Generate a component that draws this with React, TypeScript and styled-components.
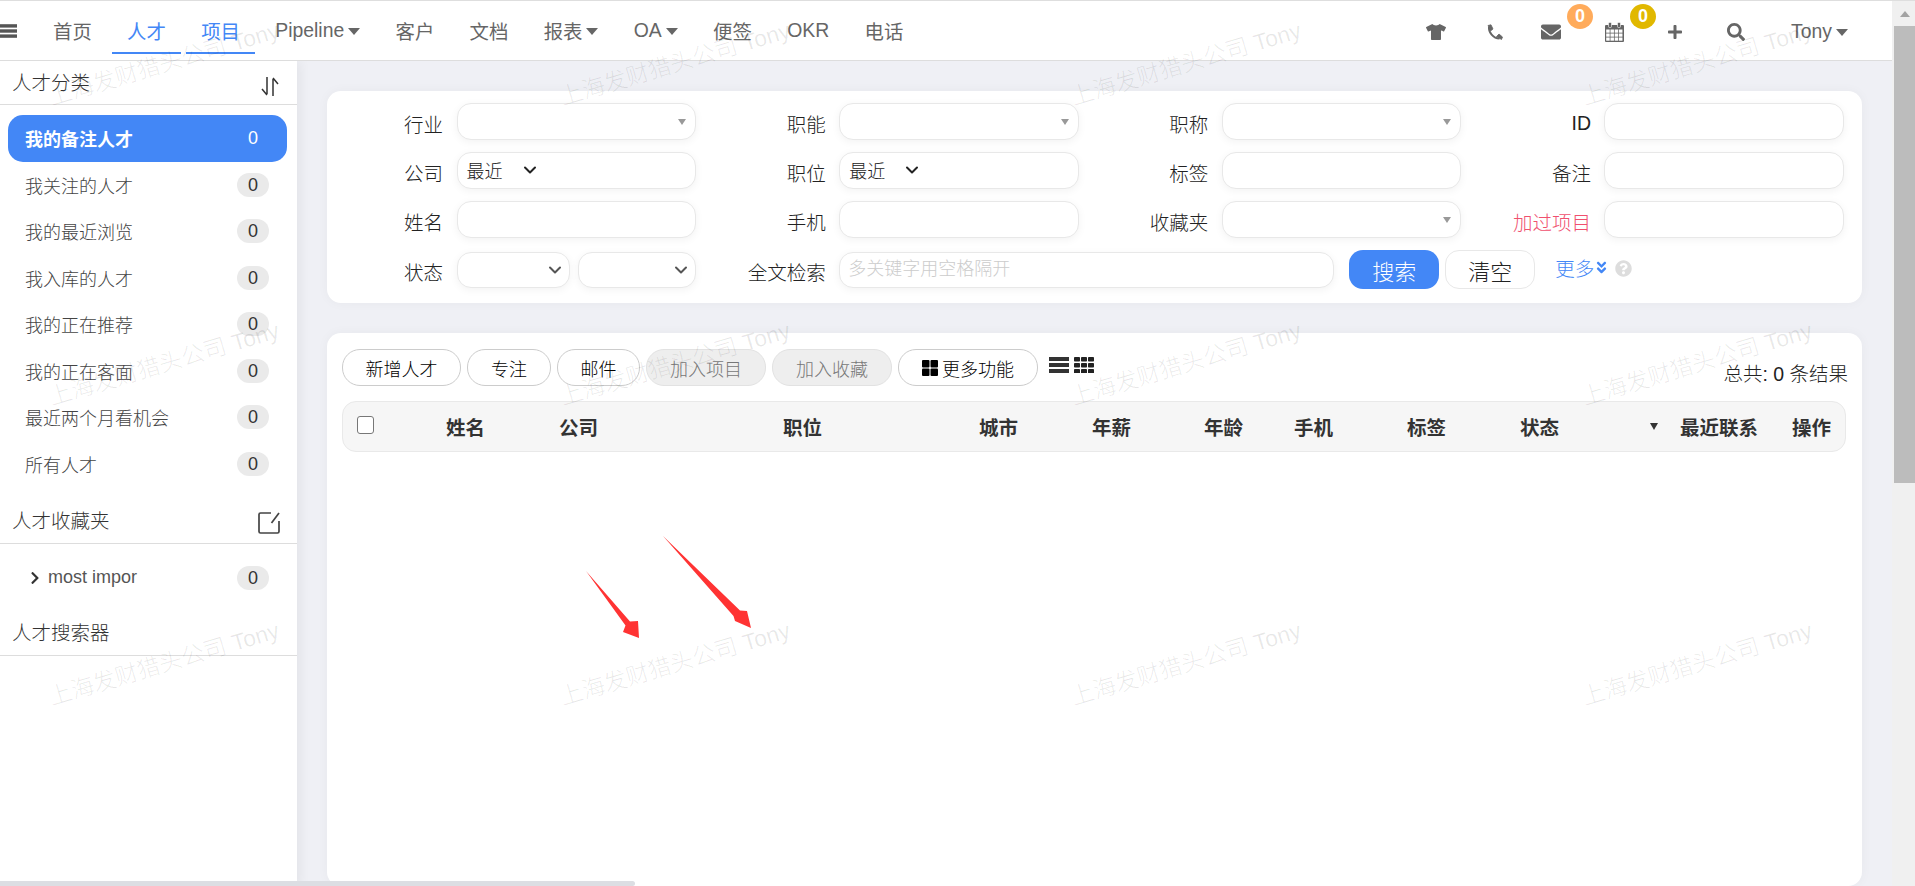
import React from "react";
import styled, { createGlobalStyle } from "styled-components";
import { ChevronDown } from "lucide-react";
import { FaTshirt, FaEnvelope, FaPlus, FaSearch, FaChevronRight, FaAngleDoubleDown, FaQuestionCircle } from "react-icons/fa";

const Global = createGlobalStyle`
  html, body { margin: 0; padding: 0; overflow: hidden; background: #fff; }
  * { box-sizing: border-box; }
  body { font-family: "Liberation Sans", "Noto Sans CJK SC", sans-serif; color: #333; }
`;

const BLUE = "#4387f6";

const Page = styled.div`
  position: relative; width: 1915px; height: 886px; overflow: hidden;
  display: flex; border-top: 1px solid #dedede;
`;
const Content = styled.div`flex: 1; min-width: 0; display: flex; flex-direction: column;`;

const Header = styled.header`
  height: 60px; flex: none; display: flex; align-items: stretch; background: #fff;
  border-bottom: 1px solid #ddd; position: relative; z-index: 2;
`;
const Burger = styled.div`width: 38px; display: flex; align-items: center; color: #555;`;
const Nav = styled.nav`display: flex; gap: 5.3px;`;
const NavItem = styled.a<{ $active?: boolean; $underline?: boolean }>`
  display: flex; align-items: center; justify-content: center; gap: 4px; padding: 7px 15px 0; height: 53px;
  font-size: 19.4px; white-space: nowrap; color: ${p => (p.$active ? BLUE : "#666")};
  border-bottom: 2.5px solid ${p => (p.$underline ? BLUE : "transparent")};
`;
const Caret = styled.i`
  display: inline-block; border-left: 6px solid transparent; border-right: 6px solid transparent;
  border-top: 7px solid #666; margin-top: 2px;
`;
const Tools = styled.div`margin-left: auto; display: flex; align-items: flex-start; color: #666; padding-right: 44px;`;
const Tool = styled.span<{ $w: number }>`
  position: relative; width: ${p => p.$w}px; height: 58px; display: flex; align-items: center; padding-top: 4px;
`;
const Badge = styled.b<{ $left: number; $bg: string }>`
  position: absolute; top: 3px; left: ${p => p.$left}px; width: 26px; height: 25px; border-radius: 50%;
  background: ${p => p.$bg}; color: #fff; font-size: 18px; line-height: 25px; text-align: center;
`;
const TonyText = styled.span`
  height: 58px; padding-top: 3px; display: flex; align-items: center; gap: 4px; font-size: 19.4px; color: #666;
`;

const Body = styled.div`flex: 1; min-height: 0; display: flex;`;
const Sidebar = styled.aside`
  width: 297px; flex: none; background: #fff; box-shadow: 4px 0 10px rgba(0,0,0,.05); position: relative; z-index: 1;
`;
const SideHead = styled.div<{ $h: number; $pad: number }>`
  height: ${p => p.$h}px; display: flex; justify-content: space-between; align-items: flex-end;
  padding: 0 17px ${p => p.$pad}px 12px; font-size: 19.5px; border-bottom: 1px solid #ddd; color: #333; font-weight: 300;
`;
const SideList = styled.ul`list-style: none; margin: 0; padding: 10px 10px 0 8px; height: 384px;`;
const SideItem = styled.li<{ $active?: boolean }>`
  height: 46.5px; display: flex; align-items: center; justify-content: space-between;
  padding: 0 18px 0 17px; font-size: 18px; border-radius: 15px;
  color: ${p => (p.$active ? "#fff" : "#444")}; font-weight: ${p => (p.$active ? 700 : 300)};
  background: ${p => (p.$active ? BLUE : "transparent")};
`;
const Count = styled.span<{ $active?: boolean }>`
  width: 32px; height: 24px; border-radius: 12px; text-align: center; line-height: 24px; font-size: 18px; font-weight: 400;
  background: ${p => (p.$active ? "transparent" : "#eaeaea")}; color: ${p => (p.$active ? "#fff" : "#333")};
`;
const TreeRow = styled.div`
  height: 57px; display: flex; align-items: center; padding: 10px 28px 0 28px; font-size: 18px; color: #555; gap: 6px;
  svg { color: #333; }
`;
const TreeCount = styled(Count)`margin-left: auto;`;

const Main = styled.main`
  flex: 1; min-width: 0; background: #eff0f5; padding: 30px 30px 0; display: flex; flex-direction: column; gap: 30px;
`;
const Card = styled.section`background: #fff; border-radius: 14px; box-shadow: 0 0 12px rgba(0,0,0,.04);`;
const FilterCard = styled(Card)`height: 212px; padding-top: 12px; display: flex; flex-direction: column; gap: 12.6px;`;
const FilterRow = styled.div`display: grid; grid-template-columns: repeat(4, 382.67px);`;
const Field = styled.div`display: flex; align-items: center;`;
const WideField = styled(Field)`grid-column: 2 / -1;`;
const Label = styled.label<{ $red?: boolean }>`
  width: 116px; margin-right: 13.5px; text-align: right; font-size: 19.5px; padding-top: 4px; font-weight: 300;
  color: ${p => (p.$red ? "#f0506e" : "#222")};
`;
const Input = styled.input<{ $w?: number }>`
  width: ${p => p.$w ?? 239.5}px; height: 36.5px; border: 1px solid #e8e8e8; border-radius: 14px; background: #fff; outline: none;
  box-shadow: 0 2px 8px rgba(0,0,0,.05); padding: 0 8px; font: inherit; font-size: 18px; font-weight: 300;
  &::placeholder { color: #ccc; }
`;
const SelectBox = styled.div<{ $w?: number }>`
  width: ${p => p.$w ?? 239.5}px; height: 36.5px; border: 1px solid #e8e8e8; border-radius: 14px; background: #fff;
  box-shadow: 0 2px 8px rgba(0,0,0,.05); display: flex; align-items: center; padding: 0 7px 0 9px; font-size: 18px; color: #222; font-weight: 300;
`;
const SmallSelect = styled(SelectBox)<{ $gap?: number }>`
  justify-content: flex-end; padding-right: 4px; margin-left: ${p => p.$gap ?? 0}px;
`;
const PickedText = styled.span`margin-right: 17px;`;
const Tri = styled.i`
  margin-left: auto; margin-right: 2px; margin-top: 2px; border-left: 4px solid transparent; border-right: 4px solid transparent; border-top: 6px solid #999;
`;
const SearchBtn = styled.button`
  width: 90px; height: 39px; margin-left: 15px; border: 0; border-radius: 14px; background: ${BLUE}; color: #fff;
  font: inherit; font-size: 22px; font-weight: 300;
`;
const ClearBtn = styled.button`
  width: 90px; height: 39px; margin-left: 6px; border: 1px solid #e8e8e8; border-radius: 14px; background: #fff; color: #222;
  font: inherit; font-size: 22px; font-weight: 300;
`;
const More = styled.a`
  margin-left: 20px; display: flex; align-items: center; color: ${BLUE}; font-size: 19.5px; font-weight: 300; margin-bottom: 4px;
`;
const Help = styled.span`margin-left: 6px; color: #ddd; display: flex; margin-bottom: 3px;`;

const ResultCard = styled(Card)`flex: 1; padding: 16px 16px 0 15px;`;
const Bar = styled.div`display: flex; align-items: center; height: 37px; gap: 6px; position: relative;`;
const Btn = styled.button<{ $w: number; $off?: boolean }>`
  width: ${p => p.$w}px; height: 37px; border: 1px solid ${p => (p.$off ? "#e2e2e2" : "#ccc")}; border-radius: 18px;
  background: ${p => (p.$off ? "#eee" : "#fff")}; color: ${p => (p.$off ? "#777" : "#000")};
  font: inherit; font-size: 18px; font-weight: 300; padding: 0; display: flex; align-items: center; justify-content: center; gap: 4px; flex: none;
`;
const ViewIcons = styled.span`display: flex; gap: 5px; margin-left: 5px; margin-bottom: 6px;`;
const Total = styled.span`position: absolute; right: -2px; top: 9px; font-size: 19.5px; font-weight: 300; color: #222;`;
const TableHead = styled.div`
  margin-top: 15px; height: 51px; background: #f6f6f6; border: 1px solid #e9e9e9; border-radius: 14px;
  display: grid; grid-template-columns: 89px 113px 224px 196px 113px 112px 90px 113px 113px 160px 112px 1fr;
  align-items: center; padding-left: 14px; font-size: 19.5px; font-weight: 700; color: #333;
`;
const Check = styled.span`
  width: 17px; height: 18px; border: 1.5px solid #777; border-radius: 3px; background: #fff; margin-top: -4px;
`;
const StateCell = styled.span`display: flex; justify-content: space-between; padding-right: 22px; align-items: center;`;
const SortTri = styled.i`border-left: 4px solid transparent; border-right: 4px solid transparent; border-top: 7px solid #333;`;

const Track = styled.div`
  width: 23px; flex: none; background: #f0f0f0; display: flex; flex-direction: column; align-items: flex-end;
`;
const ThumbArrow = styled.div`width: 21px; height: 25px; background: #f0f0f0; display: flex; align-items: center; justify-content: center;`;
const ArrowUp = styled.i`border-left: 5px solid transparent; border-right: 5px solid transparent; border-bottom: 6px solid #a3a3a3;`;
const Thumb = styled.div`width: 21px; height: 457px; background: #bcbcbc;`;

const HBar = styled.div`
  position: absolute; left: 0; bottom: 0; width: 635px; height: 5px; background: #dcdee3; border-radius: 0 3px 3px 0; z-index: 4;
`;
const Marks = styled.div`
  position: absolute; inset: 0; pointer-events: none; z-index: 3; padding: 84px 0 0 53px;
  display: grid; grid-template-columns: repeat(4, 511px); grid-auto-rows: 300px;
`;
const Mark = styled.span`
  height: 25px; line-height: 25px; font-size: 23px; white-space: nowrap; color: rgba(0,0,0,.09); font-weight: 300;
  transform: rotate(-16.5deg); transform-origin: 0 100%; width: max-content;
`;
const ArrowsSvg = styled.svg`position: absolute; left: 570px; top: 525px; pointer-events: none; z-index: 3;`;

const Bars = ({ w = 17, h = 16 }: { w?: number; h?: number }) => (
  <svg width={w} height={h} viewBox="0 0 20 16" fill="currentColor">
    <rect y="0" width="20" height="4" /><rect y="6" width="20" height="4" /><rect y="12" width="20" height="4" />
  </svg>
);
const Phone = () => (
  <svg width="17" height="17" viewBox="0 0 17 17" fill="none" stroke="#666">
    <path d="M3 3C2.500 8 7 14.500 13.500 14.500" strokeWidth="2" />
    <path d="M2 1.500L5 .8 7 5 4.500 7z M10.500 12.500L13 10 16.500 13 15.500 15.500z" fill="#666" strokeWidth=".8" strokeLinejoin="round" />
  </svg>
);
const Calendar = () => (
  <svg width="19" height="20" viewBox="0 0 19 20">
    <rect y="3" width="19" height="17" rx="1" fill="#666" />
    <rect x="3.500" y=".5" width="3" height="5" rx="1" fill="#666" stroke="#fff" strokeWidth=".6" />
    <rect x="12.500" y=".5" width="3" height="5" rx="1" fill="#666" stroke="#fff" strokeWidth=".6" />
    {[0, 1, 2].map(j => [0, 1, 2, 3].map(i => (
      <rect key={`${i}${j}`} x={1.2 + i * 4.25} y={7.5 + j * 4} width="3.500" height="3.200" fill="#fff" />
    )))}
  </svg>
);
const SortIcon = () => (
  <svg width="20" height="19" viewBox="0 0 20 19" fill="none" stroke="#333" strokeWidth="1.5">
    <path d="M7 0v17M7 18L2 12" /><path d="M13 19V2M13 1l5 6" />
  </svg>
);
const EditIcon = () => (
  <svg width="22" height="22" viewBox="0 0 22 22" fill="none" stroke="#444" strokeWidth="1.7">
    <path d="M13 1H2.500A1.500 1.500 0 0 0 1 2.500v17A1.500 1.500 0 0 0 2.500 21h17a1.500 1.500 0 0 0 1.500-1.500V9" /><path d="M21 1l-7.500 10" />
  </svg>
);
const ThLarge = () => (
  <svg width="16" height="16" viewBox="0 0 16 16" fill="#000">
    <rect width="7.500" height="7.500" rx="1" /><rect x="8.500" width="7.500" height="7.500" rx="1" /><rect y="8.500" width="7.500" height="7.500" rx="1" /><rect x="8.500" y="8.500" width="7.500" height="7.500" rx="1" />
  </svg>
);
const Th = () => (
  <svg width="20" height="16" viewBox="0 0 20 16" fill="#222">
    {[0, 6, 12].map(y => [0, 7, 14].map(x => <rect key={`${x}${y}`} x={x} y={y} width="6" height="4.500" rx=".8" />))}
  </svg>
);

const NAV: { t: string; active?: boolean; line?: boolean; caret?: boolean }[] = [
  { t: "首页" }, { t: "人才", active: true, line: true }, { t: "项目", active: true, line: true }, { t: "Pipeline", caret: true },
  { t: "客户" }, { t: "文档" }, { t: "报表", caret: true }, { t: "OA", caret: true }, { t: "便签" }, { t: "OKR" }, { t: "电话" },
];
const CATS = ["我的备注人才", "我关注的人才", "我的最近浏览", "我入库的人才", "我的正在推荐", "我的正在客面", "最近两个月看机会", "所有人才"];
const COLS = ["姓名", "公司", "职位", "城市", "年薪", "年龄", "手机", "标签"];

const Recent = () => (
  <SelectBox><PickedText>最近</PickedText><ChevronDown size={20} strokeWidth={2.4} color="#222" /></SelectBox>
);

export default function App() {
  return (
    <Page>
      <Global />
      <Content>
        <Header>
          <Burger><Bars /></Burger>
          <Nav>
            {NAV.map(n => (
              <NavItem key={n.t} $active={n.active} $underline={n.line}>
                {n.t}{n.caret && <Caret />}
              </NavItem>
            ))}
          </Nav>
          <Tools>
            <Tool $w={60}><FaTshirt size={20} /></Tool>
            <Tool $w={55}><Phone /></Tool>
            <Tool $w={64}><FaEnvelope size={20} /><Badge $left={26} $bg="#ffab5b">0</Badge></Tool>
            <Tool $w={62}><Calendar /><Badge $left={25} $bg="#e1b800">0</Badge></Tool>
            <Tool $w={60}><FaPlus size={16} /></Tool>
            <Tool $w={64}><FaSearch size={18} /></Tool>
            <TonyText>Tony<Caret /></TonyText>
          </Tools>
        </Header>
        <Body>
          <Sidebar>
            <SideHead $h={44} $pad={8}>人才分类<SortIcon /></SideHead>
            <SideList>
              {CATS.map((c, i) => (
                <SideItem key={c} $active={i === 0}>{c}<Count $active={i === 0}>0</Count></SideItem>
              ))}
            </SideList>
            <SideHead $h={55} $pad={9}>人才收藏夹<EditIcon /></SideHead>
            <TreeRow><FaChevronRight size={14} />most impor<TreeCount>0</TreeCount></TreeRow>
            <SideHead $h={55} $pad={9}>人才搜索器</SideHead>
          </Sidebar>
          <Main>
            <FilterCard>
              <FilterRow>
                <Field><Label>行业</Label><SelectBox><Tri /></SelectBox></Field>
                <Field><Label>职能</Label><SelectBox><Tri /></SelectBox></Field>
                <Field><Label>职称</Label><SelectBox><Tri /></SelectBox></Field>
                <Field><Label>ID</Label><Input /></Field>
              </FilterRow>
              <FilterRow>
                <Field><Label>公司</Label><Recent /></Field>
                <Field><Label>职位</Label><Recent /></Field>
                <Field><Label>标签</Label><Input /></Field>
                <Field><Label>备注</Label><Input /></Field>
              </FilterRow>
              <FilterRow>
                <Field><Label>姓名</Label><Input /></Field>
                <Field><Label>手机</Label><Input /></Field>
                <Field><Label>收藏夹</Label><SelectBox><Tri /></SelectBox></Field>
                <Field><Label $red>加过项目</Label><Input /></Field>
              </FilterRow>
              <FilterRow>
                <Field>
                  <Label>状态</Label>
                  <SmallSelect $w={113}><ChevronDown size={20} strokeWidth={2.4} color="#555" /></SmallSelect>
                  <SmallSelect $w={118.5} $gap={8}><ChevronDown size={20} strokeWidth={2.4} color="#555" /></SmallSelect>
                </Field>
                <WideField>
                  <Label>全文检索</Label>
                  <Input $w={495} placeholder="多关键字用空格隔开" />
                  <SearchBtn>搜索</SearchBtn>
                  <ClearBtn>清空</ClearBtn>
                  <More>更多<FaAngleDoubleDown size={15} /></More>
                  <Help><FaQuestionCircle size={17} /></Help>
                </WideField>
              </FilterRow>
            </FilterCard>
            <ResultCard>
              <Bar>
                <Btn $w={119}>新增人才</Btn>
                <Btn $w={84}>专注</Btn>
                <Btn $w={83}>邮件</Btn>
                <Btn $w={120} $off>加入项目</Btn>
                <Btn $w={120} $off>加入收藏</Btn>
                <Btn $w={140}><ThLarge />更多功能</Btn>
                <ViewIcons><Bars w={20} h={16} /><Th /></ViewIcons>
                <Total>总共: 0 条结果</Total>
              </Bar>
              <TableHead>
                <Check />
                {COLS.map(c => <span key={c}>{c}</span>)}
                <StateCell>状态<SortTri /></StateCell>
                <span>最近联系</span>
                <span>操作</span>
              </TableHead>
            </ResultCard>
          </Main>
        </Body>
      </Content>
      <Track>
        <ThumbArrow><ArrowUp /></ThumbArrow>
        <Thumb />
      </Track>
      <Marks>
        {Array.from({ length: 12 }, (_, i) => <Mark key={i}>上海发财猎头公司 Tony</Mark>)}
      </Marks>
      <ArrowsSvg width="190" height="120" viewBox="570 525 190 120" fill="#ff3333">
        <path d="M586 570L630 620.500 638 620 639 637 623 631 625.500 624.500z" />
        <path d="M663 535L740 609.500 747 610 751 627 735 620 733.500 615z" />
      </ArrowsSvg>
      <HBar />
    </Page>
  );
}
